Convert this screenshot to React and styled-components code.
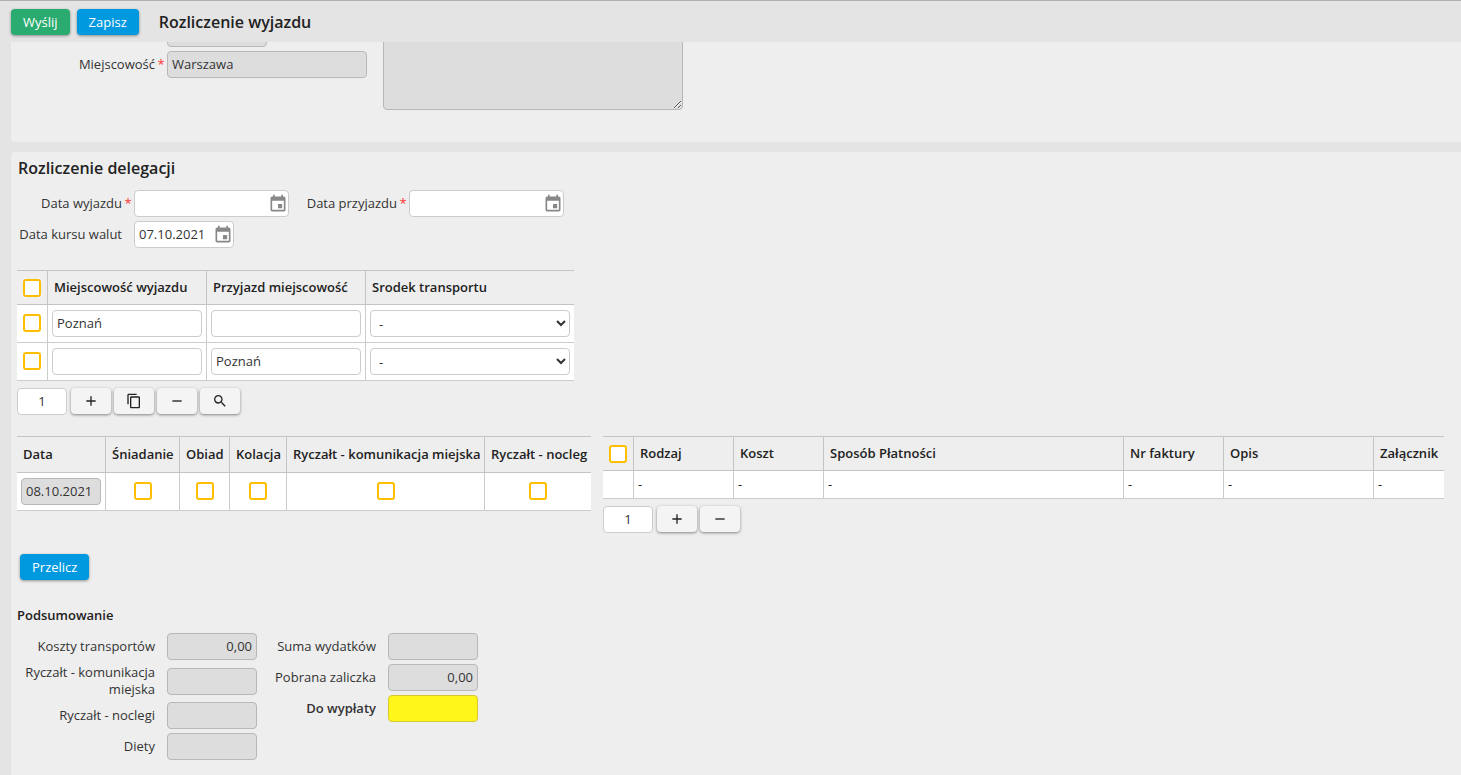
import React from "react";
import styled, { createGlobalStyle, css } from "styled-components";
import { MdAdd, MdContentCopy, MdEvent, MdRemove, MdSearch } from "react-icons/md";

const GlobalStyle = createGlobalStyle`
  *, *::before, *::after { box-sizing: border-box; }
  body {
    margin: 0;
    background: #e4e4e4;
    color: #222;
    font-family: "Open Sans", "Noto Sans", sans-serif;
    font-size: 13px;
    line-height: 17px;
  }
  input, select, textarea, button { font: inherit; color: inherit; margin: 0; }
`;

const Page = styled.div`
  display: flex;
  flex-direction: column;
  min-height: 100vh;
`;

const Toolbar = styled.header`
  display: flex;
  align-items: center;
  gap: 7px;
  height: 42px;
  padding: 1px 11px 0;
  border-top: 1px solid #b0b0b0;
  background: #e4e4e4;
`;

const PageTitle = styled.h1`
  margin: 0 0 0 13px;
  font-size: 16px;
  line-height: 22px;
  font-weight: 580;
`;

const Button = styled.button`
  height: 26px;
  padding: 0 12px;
  border: 0;
  border-radius: 4px;
  background: ${(p) => (p.$tone === "green" ? "#2aab6f" : "#0099df")};
  color: #fff;
  font-weight: 500;
  line-height: 17px;
  box-shadow: 0 1px 3px rgba(0, 0, 0, 0.4);
`;

const Content = styled.main`
  flex: 1;
  display: flex;
  flex-direction: column;
  gap: 10px;
  padding-left: 11px;
`;

const Panel = styled.section`
  background: #eee;
  ${(p) =>
    p.$main
      ? css`
          flex: 1;
          padding: 5px 17px 14px 6px;
          border-radius: 4px 0 0 0;
        `
      : css`
          height: 100px;
          overflow: hidden;
          border-radius: 0 0 0 4px;
        `}
`;

const PlaceForm = styled.div`
  display: flex;
  gap: 16px;
  margin-top: -22px;
  padding-left: 6px;
`;

const Stack = styled.div`
  display: flex;
  flex-direction: column;
  gap: 4px;
`;

const FieldRow = styled.div`
  display: flex;
  align-items: center;
  min-height: 27px;
`;

const Label = styled.label`
  display: flex;
  justify-content: flex-end;
  align-items: center;
  flex: none;
  width: ${(p) => p.$width}px;
  color: #333;
  text-align: right;
  font-weight: ${(p) => (p.$strong ? 600 : 400)};
`;

const Mark = styled.span`
  flex: none;
  width: 12px;
  text-align: center;
  color: #f33;
`;

const fieldLook = css`
  height: 27px;
  border: 1px solid #ccc;
  border-radius: 4px;
  background: #fff;
  color: #333;
  outline: none;
  &[readonly] {
    background: #ddd;
    border-color: #b8b8b8;
  }
`;

const TextInput = styled.input`
  ${fieldLook}
  display: block;
  width: ${(p) => p.$width}px;
  padding: 0 4px 2px;
  text-align: ${(p) => p.$align || "left"};
`;

const PageInput = styled(TextInput)`
  && {
    margin-right: 1px;
  }
`;

const PayoutInput = styled(TextInput)`
  &&[readonly] {
    background: #fff61a;
    border-color: #d6c832;
  }
`;

const TextArea = styled.textarea`
  ${fieldLook}
  display: block;
  width: 300px;
  height: 90px;
`;

const Select = styled.select`
  ${fieldLook}
  display: block;
  width: 200px;
  padding: 0 4px;
`;

const DateBox = styled.div`
  ${fieldLook}
  display: flex;
  align-items: center;
  width: ${(p) => p.$width}px;
`;

const DateInput = styled.input`
  flex: 1;
  min-width: 0;
  height: 25px;
  padding: 0 0 2px 4px;
  border: 0;
  border-radius: 4px;
  outline: none;
  background: transparent;
  color: #333;
`;

const DateButton = styled.button`
  display: flex;
  padding: 0;
  border: 0;
  background: none;
  && {
    color: #888;
  }
`;

const SectionTitle = styled.h2`
  margin: 0 0 11px 1px;
  font-size: 16px;
  line-height: 22px;
  font-weight: 580;
`;

const SubTitle = styled.h3`
  margin: 27px 0 9px;
  font-size: 13px;
  line-height: 17px;
  font-weight: 600;
`;

const Check = styled.input.attrs({ type: "checkbox" })`
  appearance: none;
  display: block;
  width: 18px;
  height: 18px;
  && {
    margin: 0 auto;
  }
  td > && {
    margin-bottom: 1px;
  }
  border: 2px solid #ffbf00;
  border-radius: 3px;
  background: #fff;
  &:checked {
    background: #ffbf00;
  }
`;

const Table = styled.table`
  width: ${(p) => (p.$width ? `${p.$width}px` : "100%")};
  table-layout: fixed;
  border-spacing: 0;
  border-top: 1px solid #c4c4c4;
`;

const HeadCell = styled.th`
  height: ${(p) => p.$height || 34}px;
  padding: 0 6px;
  border-bottom: 1px solid #c4c4c4;
  font-weight: 560;
  text-align: left;
  white-space: nowrap;
  & + & {
    border-left: 1px solid #c4c4c4;
  }
`;

const Cell = styled.td`
  height: ${(p) => p.$height || 38}px;
  padding: 0 4px;
  border-bottom: 1px solid #ccc;
  background: #fff;
  & + & {
    border-left: 1px solid #ccc;
  }
`;

const Pager = styled.div`
  display: flex;
  gap: 3px;
  margin-top: 7px;
`;

const IconButton = styled.button`
  display: flex;
  align-items: center;
  justify-content: center;
  width: 40px;
  height: 26px;
  padding: 0;
  border: 0;
  border-radius: 4px;
  background: #f4f4f4;
  box-shadow: 0 1px 3px rgba(0, 0, 0, 0.45);
`;

const RouteBlock = styled.div`
  width: 557px;
  margin-top: 22px;
`;

const TablePair = styled.div`
  display: flex;
  flex-wrap: wrap;
  align-items: flex-start;
  gap: 12px;
  margin: 21px 0;
`;

const CostBlock = styled.div`
  flex: 1;
  min-width: 780px;
`;

const Indent = styled.div`
  display: flex;
  padding-left: 3px;
`;

const Columns = styled.div`
  display: flex;
  align-items: flex-start;
`;

function Field({ id, label, width, required, strong, children }) {
  return (
    <FieldRow>
      <Label htmlFor={id} $width={width} $strong={strong}>
        {label}
        <Mark>{required ? "*" : ""}</Mark>
      </Label>
      {children}
    </FieldRow>
  );
}

function DateField({ id, width, value }) {
  return (
    <DateBox $width={width}>
      <DateInput id={id} defaultValue={value} />
      <DateButton type="button" aria-label="Wybierz datę">
        <MdEvent size={20} />
      </DateButton>
    </DateBox>
  );
}

function SumField({ id, label, labelWidth, value = "", strong }) {
  const Box = strong ? PayoutInput : TextInput;
  return (
    <Field id={id} label={label} width={labelWidth} strong={strong}>
      <Box id={id} $width={90} $align="right" readOnly value={value} />
    </Field>
  );
}

const routes = [
  { from: "Poznań", to: "" },
  { from: "", to: "Poznań" },
];

const allowances = [
  { name: "Śniadanie", width: 74 },
  { name: "Obiad", width: 50 },
  { name: "Kolacja", width: 57 },
  { name: "Ryczałt - komunikacja miejska", width: 198 },
  { name: "Ryczałt - nocleg", width: 107 },
];

const costs = [
  { name: "Rodzaj", width: 100 },
  { name: "Koszt", width: 90 },
  { name: "Sposób Płatności" },
  { name: "Nr faktury", width: 100 },
  { name: "Opis", width: 150 },
  { name: "Załącznik", width: 71 },
];

function RouteTable() {
  return (
    <RouteBlock>
      <Table>
        <colgroup>
          <col width="30" />
          <col width="159" />
          <col width="159" />
          <col />
        </colgroup>
        <thead>
          <tr>
            <HeadCell><Check aria-label="Zaznacz wszystkie" /></HeadCell>
            <HeadCell>Miejscowość wyjazdu</HeadCell>
            <HeadCell>Przyjazd miejscowość</HeadCell>
            <HeadCell>Srodek transportu</HeadCell>
          </tr>
        </thead>
        <tbody>
          {routes.map((r, i) => (
            <tr key={i}>
              <Cell><Check aria-label="Zaznacz wiersz" /></Cell>
              <Cell><TextInput aria-label="Miejscowość wyjazdu" $width={150} defaultValue={r.from} /></Cell>
              <Cell><TextInput aria-label="Przyjazd miejscowość" $width={150} defaultValue={r.to} /></Cell>
              <Cell>
                <Select aria-label="Srodek transportu">
                  <option>-</option>
                </Select>
              </Cell>
            </tr>
          ))}
        </tbody>
      </Table>
      <Pager>
        <PageInput aria-label="Strona" $width={50} $align="center" defaultValue="1" />
        <IconButton type="button" aria-label="Dodaj"><MdAdd size={16} /></IconButton>
        <IconButton type="button" aria-label="Kopiuj"><MdContentCopy size={16} /></IconButton>
        <IconButton type="button" aria-label="Usuń"><MdRemove size={16} /></IconButton>
        <IconButton type="button" aria-label="Szukaj"><MdSearch size={16} /></IconButton>
      </Pager>
    </RouteBlock>
  );
}

function AllowanceTable() {
  return (
    <Table $width={574}>
      <colgroup>
        <col width="88" />
        {allowances.map((a) => <col key={a.name} width={a.width} />)}
      </colgroup>
      <thead>
        <tr>
          <HeadCell $height={36}>Data</HeadCell>
          {allowances.map((a) => <HeadCell key={a.name} $height={36}>{a.name}</HeadCell>)}
        </tr>
      </thead>
      <tbody>
        <tr>
          <Cell><TextInput aria-label="Data" $width={80} readOnly value="08.10.2021" /></Cell>
          {allowances.map((a) => (
            <Cell key={a.name}><Check aria-label={a.name} /></Cell>
          ))}
        </tr>
      </tbody>
    </Table>
  );
}

function CostTable() {
  return (
    <CostBlock>
      <Table>
        <colgroup>
          <col width="30" />
          {costs.map((c) => <col key={c.name} width={c.width} />)}
        </colgroup>
        <thead>
          <tr>
            <HeadCell><Check aria-label="Zaznacz wszystkie" /></HeadCell>
            {costs.map((c) => <HeadCell key={c.name}>{c.name}</HeadCell>)}
          </tr>
        </thead>
        <tbody>
          <tr>
            <Cell $height={28} />
            {costs.map((c) => <Cell key={c.name} $height={28}>-</Cell>)}
          </tr>
        </tbody>
      </Table>
      <Pager>
        <PageInput aria-label="Strona" $width={50} $align="center" defaultValue="1" />
        <IconButton type="button" aria-label="Dodaj"><MdAdd size={16} /></IconButton>
        <IconButton type="button" aria-label="Usuń"><MdRemove size={16} /></IconButton>
      </Pager>
    </CostBlock>
  );
}

export default function App() {
  return (
    <Page>
      <GlobalStyle />
      <Toolbar>
        <Button type="button" $tone="green">Wyślij</Button>
        <Button type="button">Zapisz</Button>
        <PageTitle>Rozliczenie wyjazdu</PageTitle>
      </Toolbar>
      <Content>
        <Panel>
          <PlaceForm>
            <Stack>
              <Field id="code" width={150}>
                <TextInput id="code" $width={100} readOnly value="" />
              </Field>
              <Field id="city" label="Miejscowość" width={150} required>
                <TextInput id="city" $width={200} readOnly value="Warszawa" />
              </Field>
            </Stack>
            <TextArea aria-label="Opis" readOnly />
          </PlaceForm>
        </Panel>
        <Panel $main>
          <SectionTitle>Rozliczenie delegacji</SectionTitle>
          <Stack>
            <Columns>
              <Field id="depart" label="Data wyjazdu" width={117} required>
                <DateField id="depart" width={155} />
              </Field>
              <Field id="arrive" label="Data przyjazdu" width={120} required>
                <DateField id="arrive" width={155} />
              </Field>
            </Columns>
            <Field id="rate" label="Data kursu walut" width={117}>
              <DateField id="rate" width={100} value="07.10.2021" />
            </Field>
          </Stack>
          <RouteTable />
          <TablePair>
            <AllowanceTable />
            <CostTable />
          </TablePair>
          <Indent>
            <Button type="button">Przelicz</Button>
          </Indent>
          <SubTitle>Podsumowanie</SubTitle>
          <Columns>
            <Stack>
              <SumField id="transport" label="Koszty transportów" labelWidth={150} value="0,00" />
              <SumField id="local" label="Ryczałt - komunikacja miejska" labelWidth={150} />
              <SumField id="lodging" label="Ryczałt - noclegi" labelWidth={150} />
              <SumField id="diet" label="Diety" labelWidth={150} />
            </Stack>
            <Stack>
              <SumField id="expenses" label="Suma wydatków" labelWidth={131} />
              <SumField id="advance" label="Pobrana zaliczka" labelWidth={131} value="0,00" />
              <SumField id="payout" label="Do wypłaty" labelWidth={131} strong />
            </Stack>
          </Columns>
        </Panel>
      </Content>
    </Page>
  );
}
